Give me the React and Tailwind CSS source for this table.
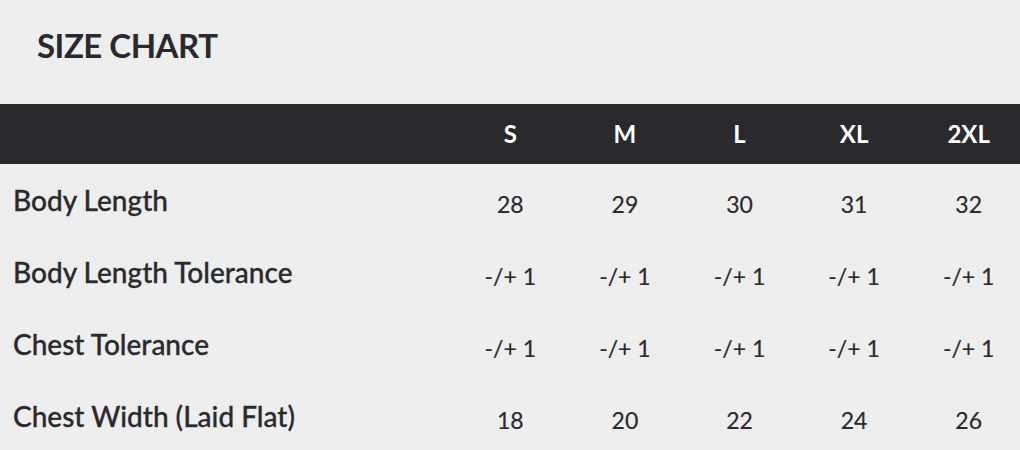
import React from 'react';

const sizes = ['S', 'M', 'L', 'XL', '2XL'];

const rows = [
  { label: 'Body Length', values: ['28', '29', '30', '31', '32'] },
  { label: 'Body Length Tolerance', values: ['-/+ 1', '-/+ 1', '-/+ 1', '-/+ 1', '-/+ 1'] },
  { label: 'Chest Tolerance', values: ['-/+ 1', '-/+ 1', '-/+ 1', '-/+ 1', '-/+ 1'] },
  { label: 'Chest Width (Laid Flat)', values: ['18', '20', '22', '24', '26'] },
];

const App = () => {
  return (
    <div className="w-[1020px] h-[450px] overflow-hidden bg-[#eeeeee] text-[#2a2a2e] font-['Lato',sans-serif]">
      {/* Title */}
      <div className="h-[104px] pl-[37px] pt-[25px]">
        <h2 className="text-[33px] font-bold leading-[40px] tracking-[-0.5px]">SIZE CHART</h2>
      </div>

      {/* Table */}
      <table className="w-[1026px] table-fixed border-collapse">
        <colgroup>
          <col className="w-[453px]" />
          {sizes.map((s) => (
            <col key={s} className="w-[114.6px]" />
          ))}
        </colgroup>
        <thead>
          <tr className="h-[60px] bg-[#2a2a2e] text-white">
            <th></th>
            {sizes.map((s) => (
              <th key={s} className="text-[24px] font-bold text-center">
                {s}
              </th>
            ))}
          </tr>
        </thead>
        <tbody>
          {rows.map((row) => (
            <tr key={row.label} className="h-[72px]">
              <td className="pl-[13px] text-[28px] font-medium align-middle whitespace-nowrap [-webkit-text-stroke:0.3px_#2a2a2e]">
                {row.label}
              </td>
              {row.values.map((v, i) => (
                <td key={i} className="text-center text-[23px] pt-[8px] align-middle [-webkit-text-stroke:0.2px_#2a2a2e]">
                  {v}
                </td>
              ))}
            </tr>
          ))}
        </tbody>
      </table>
    </div>
  );
};

export default App;
